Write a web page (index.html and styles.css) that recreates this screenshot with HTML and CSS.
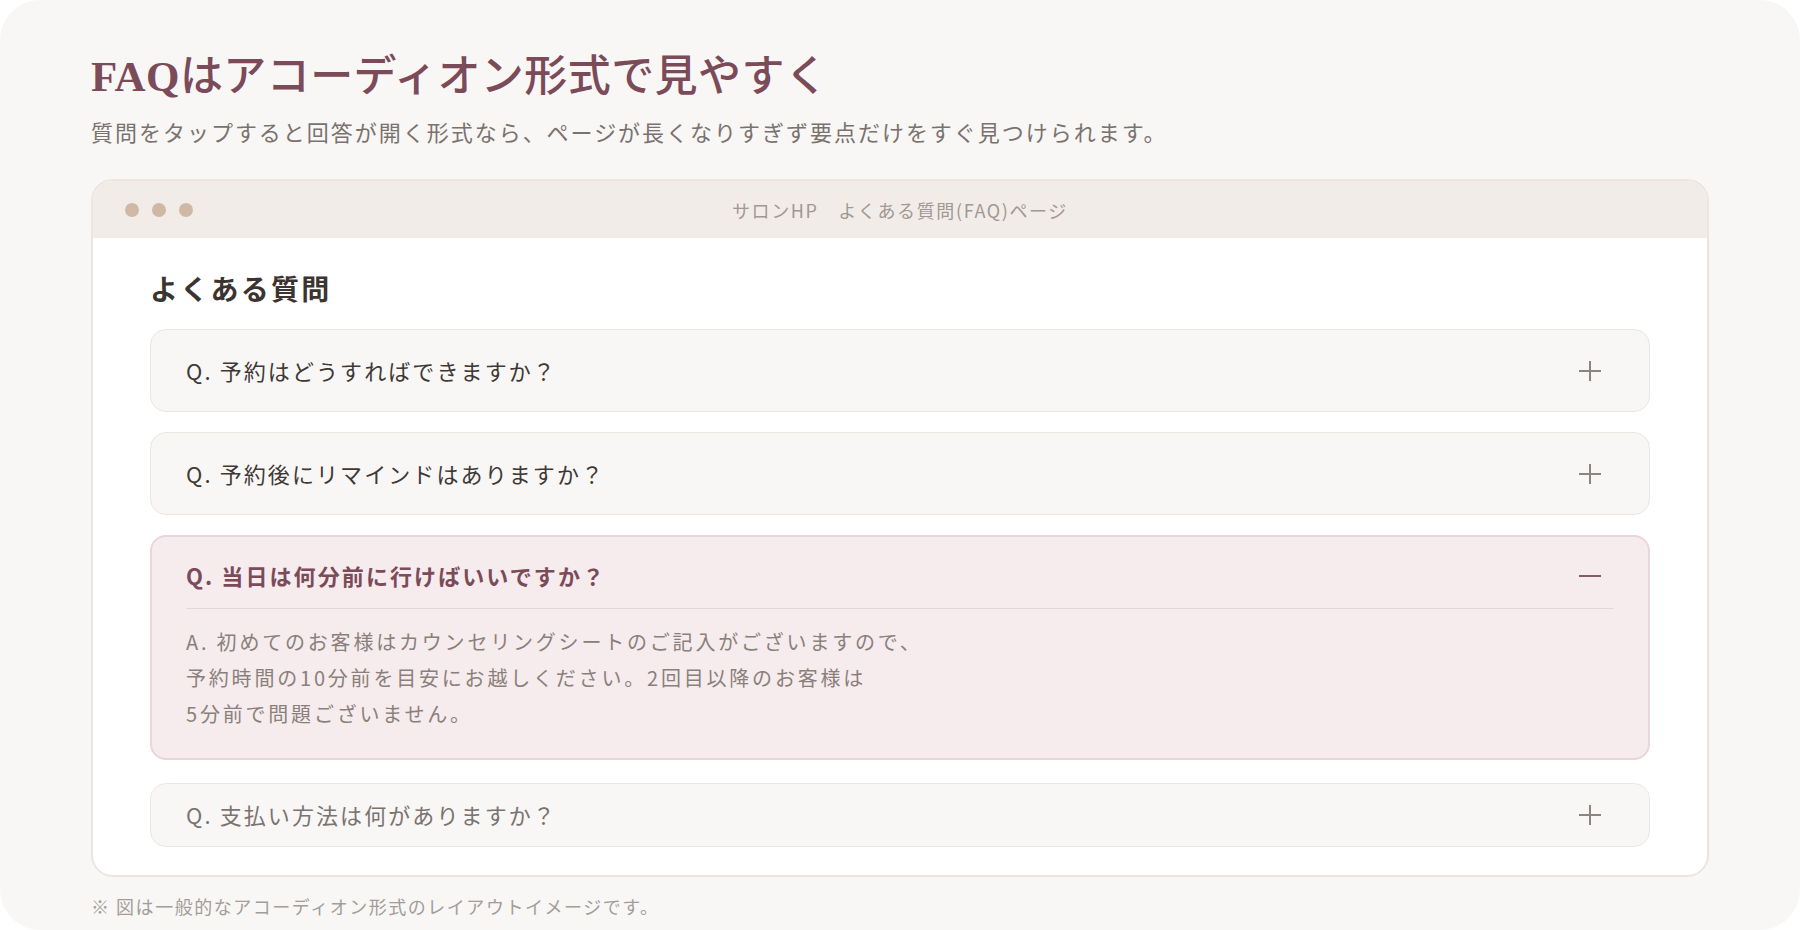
FILE: index.html
```html
<!DOCTYPE html>
<html lang="ja">
<head>
    <meta charset="UTF-8">
    <title>FAQはアコーディオン形式で見やすく</title>
    <link rel="stylesheet" href="styles.css">
</head>
<body>
    <div class="page">
        <h1 class="title"><span class="title-en">FAQ</span>はアコーディオン形式で見やすく</h1>
        <p class="lead">質問をタップすると回答が開く形式なら、ページが長くなりすぎず要点だけをすぐ見つけられます。</p>

        <!-- ブラウザ風の枠 -->
        <div class="browser">
            <div class="browser-bar">
                <div class="dots"><span></span><span></span><span></span></div>
                <div class="browser-title">サロンHP　よくある質問(FAQ)ページ</div>
                <div></div>
            </div>

            <div class="browser-body">
                <h2 class="faq-heading">よくある質問</h2>

                <div class="faq-list">
                    <div class="faq-item">
                        <button class="faq-q" onclick="toggleFaq(this)">
                            <span>Q. 予約はどうすればできますか？</span>
                            <svg class="faq-icon" viewBox="0 0 22 22"><path class="v" d="M11 1v20"/><path d="M0 11h22"/></svg>
                        </button>
                        <div class="faq-a">A. 予約ページまたはお電話からご予約いただけます。</div>
                    </div>

                    <div class="faq-item">
                        <button class="faq-q" onclick="toggleFaq(this)">
                            <span>Q. 予約後にリマインドはありますか？</span>
                            <svg class="faq-icon" viewBox="0 0 22 22"><path class="v" d="M11 1v20"/><path d="M0 11h22"/></svg>
                        </button>
                        <div class="faq-a">A. 前日にメールでお知らせします。</div>
                    </div>

                    <div class="faq-item open">
                        <button class="faq-q" onclick="toggleFaq(this)">
                            <span>Q. 当日は何分前に行けばいいですか？</span>
                            <svg class="faq-icon" viewBox="0 0 22 22"><path class="v" d="M11 1v20"/><path d="M0 11h22"/></svg>
                        </button>
                        <div class="faq-a">A. 初めてのお客様はカウンセリングシートのご記入がございますので、<br>予約時間の10分前を目安にお越しください。2回目以降のお客様は<br>5分前で問題ございません。</div>
                    </div>

                    <div class="faq-item muted">
                        <button class="faq-q" onclick="toggleFaq(this)">
                            <span>Q. 支払い方法は何がありますか？</span>
                            <svg class="faq-icon" viewBox="0 0 22 22"><path class="v" d="M11 1v20"/><path d="M0 11h22"/></svg>
                        </button>
                        <div class="faq-a">A. 現金・各種クレジットカードがご利用いただけます。</div>
                    </div>
                </div>
            </div>
        </div>

        <p class="note">※ 図は一般的なアコーディオン形式のレイアウトイメージです。</p>
    </div>

    <script>
        // 質問をクリックで開閉
        function toggleFaq(btn) {
            btn.parentElement.classList.toggle('open');
        }
    </script>
</body>
</html>
```

FILE: styles.css
```css
/* 全体 */
body {
    margin: 0;
    background: #ffffff;
    font-family: "Noto Sans CJK JP", sans-serif;
    color: #3b3431;
}

.page {
    height: 930px;
    box-sizing: border-box;
    padding: 48px 91px 0;
    background: #f8f7f5;
    border-radius: 40px;
}

.title {
    margin: 0;
    font-family: "Liberation Serif", "Noto Sans CJK JP", serif;
    font-size: 43px;
    font-weight: 500;
    line-height: 57px;
    letter-spacing: 0.01em;
    color: #7b4b5a;
}

.title-en {
    font-weight: 700;
}

.lead {
    margin: 10px 0 0;
    font-size: 22px;
    line-height: 33px;
    letter-spacing: 0.09em;
    color: #7a726e;
}

/* ブラウザ枠 */
.browser {
    margin-top: 31px;
    background: #ffffff;
    border: 2px solid #ece5e0;
    border-radius: 22px;
    overflow: hidden;
}

.browser-bar {
    display: grid;
    grid-template-columns: 1fr auto 1fr;
    align-items: center;
    height: 57px;
    padding: 0 32px;
    background: #f2ece8;
}

.dots {
    display: flex;
    gap: 13px;
}

.dots span {
    width: 14px;
    height: 14px;
    border-radius: 50%;
    background: #d0b9a4;
}

.browser-title {
    font-size: 18px;
    letter-spacing: 0.09em;
    color: #a09894;
}

.browser-body {
    padding: 31px 57px 28px;
}

.faq-heading {
    margin: 0 0 21px;
    font-size: 28px;
    font-weight: 700;
    line-height: 39px;
    letter-spacing: 0.08em;
    color: #3b3431;
}

/* アコーディオン */
.faq-list {
    display: flex;
    flex-direction: column;
    gap: 20px;
}

.faq-item {
    padding: 0 35px;
    background: #f8f7f5;
    border: 1px solid #ece6e1;
    border-radius: 16px;
}

.faq-q {
    display: flex;
    align-items: center;
    justify-content: space-between;
    width: 100%;
    padding: 24px 0;
    background: none;
    border: none;
    font-family: inherit;
    font-size: 22px;
    line-height: 33px;
    letter-spacing: 0.095em;
    color: #3f3936;
    text-align: left;
    cursor: pointer;
}

.faq-icon {
    width: 22px;
    height: 22px;
    margin-right: 13px;
    fill: none;
    stroke: #8c8480;
    stroke-width: 2;
}

.faq-a {
    display: none;
    font-size: 20px;
    line-height: 36px;
    letter-spacing: 0.14em;
    color: #8a807b;
}

.faq-item.open {
    padding: 0 34px;
    margin-bottom: 3px;
    background: #f6ecee;
    border: 2px solid #e8d6db;
}

.faq-item.open .faq-q {
    padding: 22px 0 16px;
    border-bottom: 1px solid #e6d6da;
    font-weight: 700;
    color: #7b4b5a;
}

.faq-item.open .faq-icon {
    stroke: #85596a;
}

.faq-item.open .faq-icon .v {
    display: none;
}

.faq-item.open .faq-a {
    display: block;
    padding: 15px 0 26px;
}

.faq-item.muted .faq-q {
    padding: 14px 0 15px;
    color: #7a7370;
}

.note {
    margin: 16px 0 0;
    font-size: 18px;
    line-height: 27px;
    letter-spacing: 0.085em;
    color: #a39d99;
}
```
